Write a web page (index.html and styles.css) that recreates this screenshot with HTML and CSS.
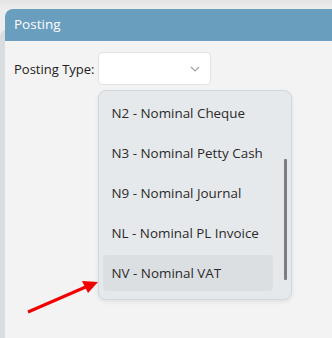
FILE: index.html
```html
<!DOCTYPE html>
<html lang="en">
<head>
    <meta charset="UTF-8">
    <title>Posting</title>
    <link rel="stylesheet" href="styles.css">
</head>
<body>
    <div class="page">
        <div class="panel">
            <div class="panel-head">Posting</div>
            <div class="panel-body">
                <div class="field">
                    <label class="field-label">Posting Type:</label>
                    <div class="select-wrap">
                        <div class="select">
                            <svg class="chevron" width="10" height="6" viewBox="0 0 10 6">
                                <path d="M1 1 L5 5 L9 1" fill="none" stroke="#a3a3a3" stroke-width="1.2"/>
                            </svg>
                        </div>
                        <div class="dropdown">
                            <div class="option">N2 - Nominal Cheque</div>
                            <div class="option">N3 - Nominal Petty Cash</div>
                            <div class="option">N9 - Nominal Journal</div>
                            <div class="option">NL - Nominal PL Invoice</div>
                            <div class="option active">NV - Nominal VAT</div>
                            <div class="scrollbar"></div>
                        </div>
                    </div>
                </div>
            </div>
        </div>
        <!-- red pointer arrow -->
        <svg class="arrow" width="120" height="80" viewBox="0 0 120 80">
            <line x1="28" y1="52" x2="88" y2="26" stroke="#f20000" stroke-width="3"/>
            <polygon points="98,22 82,21 88,33" fill="#f20000"/>
        </svg>
    </div>
</body>
</html>
```
FILE: styles.css
```css
* {
    margin: 0;
    padding: 0;
    box-sizing: border-box;
}
body {
    background: #e9e9ea;
    font-family: "Open Sans", "Noto Sans", sans-serif;
    font-size: 13px;
    color: #222;
}
.page {
    position: relative;
    width: 332px;
    height: 338px;
    padding-top: 9px;
    background: linear-gradient(#e4e4e4, #ededed 9px);
    overflow: hidden;
}
.panel {
    margin-left: 5px;
    height: 329px;
    background: #f3f3f3;
    border-top-left-radius: 8px;
    box-shadow: -5px 20px 0 #dadde0;
}
.panel-head {
    height: 32px;
    padding-left: 9px;
    line-height: 31px;
    background: #6a9ebe;
    color: #fff;
    font-size: 13.5px;
    border-top-left-radius: 8px;
}
.panel-body {
    padding: 11px 9px;
}
.field {
    display: flex;
    align-items: center;
    gap: 3px;
}
.field-label {
    font-size: 13px;
}
.select-wrap {
    position: relative;
}
.select {
    width: 113px;
    height: 33px;
    background: #fff;
    border: 1px solid #e2e2e2;
    border-radius: 4px;
    display: flex;
    align-items: center;
    justify-content: flex-end;
    padding-right: 10px;
}
.dropdown {
    position: absolute;
    top: 38px;
    left: 0;
    width: 194px;
    height: 210px;
    padding: 4px;
    background: #e6e9ec;
    border: 1px solid #d0d7df;
    border-radius: 8px;
    box-shadow: 0 2px 4px rgba(0, 0, 0, 0.08);
    display: flex;
    flex-direction: column;
    gap: 4px;
}
.option {
    width: 170px;
    height: 36px;
    line-height: 36px;
    padding-left: 9px;
    border-radius: 4px;
    font-size: 13.4px;
    color: #2a2a2a;
    white-space: nowrap;
}
.option.active {
    background: #dcdfe2;
}
.scrollbar {
    position: absolute;
    right: 4px;
    top: 68px;
    width: 3px;
    height: 121px;
    background: #7e7e7e;
    border-radius: 1px;
}
.arrow {
    position: absolute;
    left: 0;
    top: 260px;
}
```
